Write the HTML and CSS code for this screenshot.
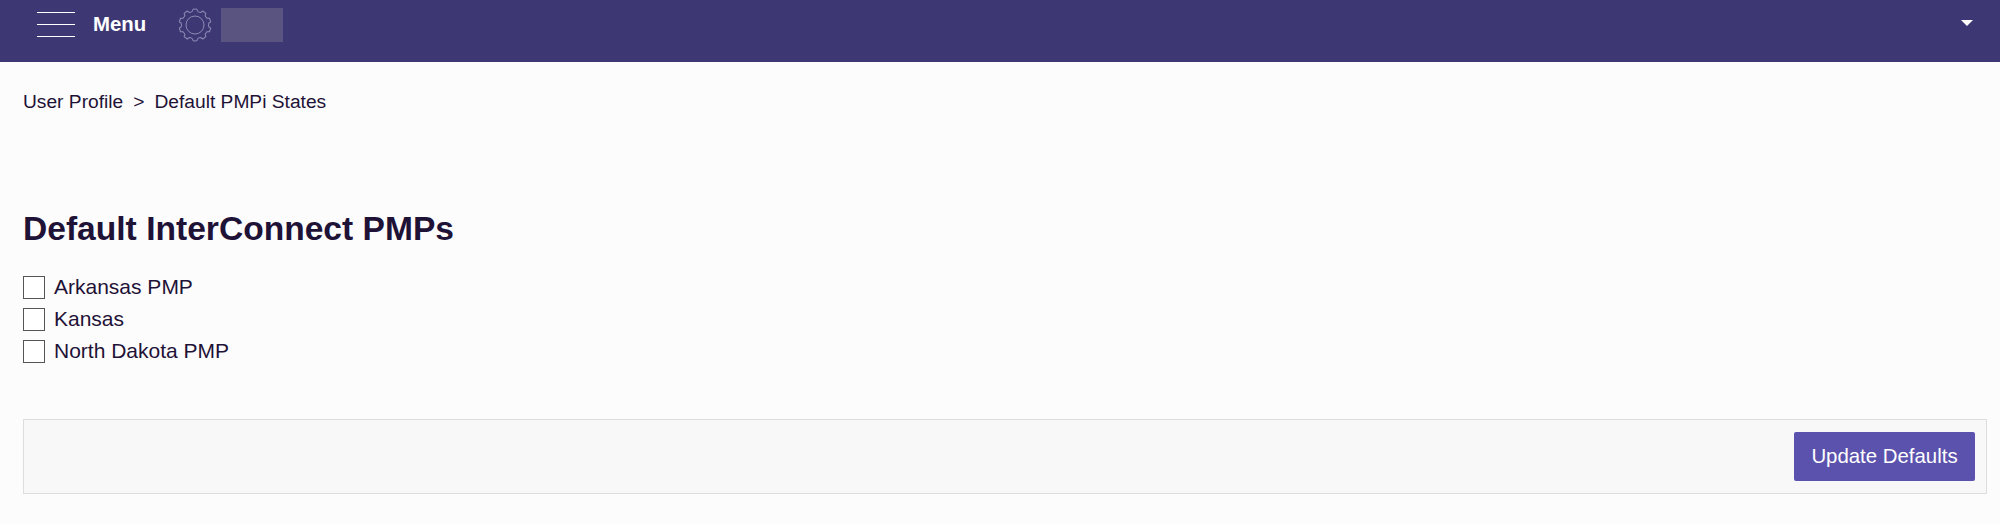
FILE: index.html
```html
<!DOCTYPE html>
<html lang="en">
<head>
    <meta charset="UTF-8">
    <meta name="viewport" content="width=device-width, initial-scale=1.0">
    <title>Default PMPi States</title>
    <link rel="stylesheet" href="styles.css">
</head>
<body>
    <header class="topbar">
        <button type="button" class="menu-btn">
            <span class="burger"><i></i><i></i><i></i></span>
            <span class="menu-label">Menu</span>
        </button>
        <svg class="gear" viewBox="0 0 34 34" width="34" height="34" fill="none" stroke="#8f8bb5" stroke-width="1" stroke-linejoin="round">
            <defs>
                <path id="tooth" d="M12.83 4.16 L14.4 3.4 L15.05 1.12 H18.95 L19.6 3.4 L21.17 4.16"/>
            </defs>
            <use href="#tooth"/>
            <use href="#tooth" transform="rotate(36 17 17)"/>
            <use href="#tooth" transform="rotate(72 17 17)"/>
            <use href="#tooth" transform="rotate(108 17 17)"/>
            <use href="#tooth" transform="rotate(144 17 17)"/>
            <use href="#tooth" transform="rotate(180 17 17)"/>
            <use href="#tooth" transform="rotate(216 17 17)"/>
            <use href="#tooth" transform="rotate(252 17 17)"/>
            <use href="#tooth" transform="rotate(288 17 17)"/>
            <use href="#tooth" transform="rotate(324 17 17)"/>
            <circle cx="17" cy="17" r="9"/>
        </svg>
        <div class="logo-box"></div>
        <span class="caret"></span>
    </header>

    <main class="content">
        <nav class="crumbs">
            <span>User Profile</span>
            <span class="sep">&gt;</span>
            <span>Default PMPi States</span>
        </nav>

        <h1>Default InterConnect PMPs</h1>

        <form class="states">
            <label class="state"><input type="checkbox"> Arkansas PMP</label>
            <label class="state"><input type="checkbox"> Kansas</label>
            <label class="state"><input type="checkbox"> North Dakota PMP</label>

            <div class="actions">
                <button type="button" class="update">Update Defaults</button>
            </div>
        </form>
    </main>
</body>
</html>
```

FILE: styles.css
```css
* {
    box-sizing: border-box;
}

html, body {
    height: 100%;
}

body {
    margin: 0;
    background-color: #fcfcfc;
    color: #1f1237;
    font-family: "Liberation Sans", Arial, sans-serif;
    overflow: hidden;
}

.topbar {
    display: flex;
    align-items: flex-start;
    height: 62px;
    background-color: #3d3873;
    color: white;
    padding-left: 37px;
    padding-right: 27px;
}

.menu-btn {
    display: flex;
    align-items: center;
    height: 49px;
    padding: 0;
    background: none;
    border: none;
    color: white;
    font: inherit;
}

.burger {
    display: flex;
    flex-direction: column;
    gap: 11px;
    width: 38px;
}

.burger i {
    display: block;
    height: 1px;
    background-color: white;
}

.menu-label {
    margin-left: 18px;
    font-size: 20.4px;
    font-weight: bold;
}

.gear {
    margin-left: 32px;
    margin-top: 8px;
}

.logo-box {
    width: 62px;
    height: 34px;
    margin-left: 9px;
    margin-top: 8px;
    background-color: #5a5480;
}

.caret {
    margin-left: auto;
    margin-top: 20px;
    border-left: 6px solid transparent;
    border-right: 6px solid transparent;
    border-top: 6px solid white;
}

.content {
    padding: 29px 13px 0 23px;
}

.crumbs {
    display: flex;
    gap: 10px;
    font-size: 19.2px;
    line-height: 22px;
}

h1 {
    margin: 96px 0 0;
    font-size: 33.6px;
    line-height: 40px;
    font-weight: bold;
}

.states {
    margin-top: 22px;
}

.state {
    display: flex;
    align-items: center;
    gap: 9px;
    height: 32px;
    font-size: 21px;
}

.state input {
    appearance: none;
    width: 22px;
    height: 23px;
    margin: 0;
    background-color: white;
    border: 1px solid #555;
}

.actions {
    display: flex;
    justify-content: flex-end;
    margin-top: 52px;
    padding: 12px 11px 11px;
    height: 75px;
    background-color: #f8f8f8;
    border: 1px solid #ddd;
}

.update {
    width: 181px;
    height: 49px;
    background-color: #5b52ad;
    color: white;
    border: none;
    border-radius: 2px;
    font-family: inherit;
    font-size: 20.4px;
}
```
